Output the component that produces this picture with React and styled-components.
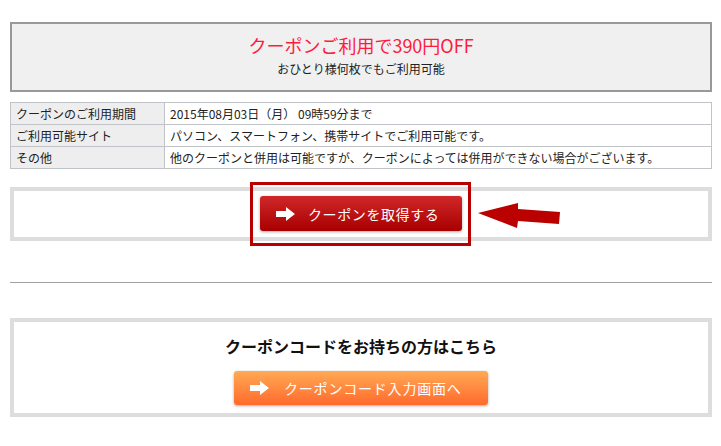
import React from "react";
import styled, { createGlobalStyle } from "styled-components";

const GlobalStyle = createGlobalStyle`
  body {
    margin: 0;
    background: #fff;
    font-family: "Noto Sans CJK JP", "Noto Sans", sans-serif;
    color: #333;
  }
`;

const Page = styled.div`
  width: 702px;
  margin-left: 10px;
  padding-top: 22px;
`;

const OfferBox = styled.div`
  border: 2px solid #999;
  background: #f0f0f0;
  text-align: center;
  padding: 9px 0 12px;

  h2 {
    margin: 0;
    font-size: 18px;
    line-height: 24px;
    font-weight: normal;
    color: #ff1a3c;
  }

  p {
    margin: 3px 0 0;
    font-size: 12px;
    line-height: 18px;
    color: #222;
  }
`;

const InfoTable = styled.table`
  width: 100%;
  margin-top: 10px;
  margin-bottom: 18px;
  border-collapse: collapse;
  font-size: 12px;

  th,
  td {
    border: 1px solid #c0c4c8;
    height: 21px;
    padding: 0 5px;
    text-align: left;
    font-weight: normal;
    color: #222;
    line-height: 20px;
  }

  th {
    width: 143px;
    background: #eeeeee;
  }
`;

const Section = styled.div`
  border: 4px solid #dddddd;
  display: flex;
  flex-direction: column;
  align-items: center;
  padding: ${(p) => p.$pad};
`;

const SectionTitle = styled.h3`
  margin: 0 0 13px;
  font-size: 16px;
  line-height: 24px;
  font-weight: bold;
  color: #111;
`;

const ButtonWrap = styled.div`
  position: relative;
`;

const Highlight = styled.div`
  position: absolute;
  top: -14px;
  bottom: -15px;
  left: -10px;
  right: -9px;
  border: 3px solid #b80000;
`;

const Pointer = styled.svg`
  position: absolute;
  left: calc(100% + 16px);
  top: 6px;
`;

const ActionButton = styled.a`
  display: flex;
  align-items: center;
  box-sizing: border-box;
  width: ${(p) => p.$width}px;
  height: ${(p) => p.$height}px;
  padding-left: 16px;
  border-radius: 3px;
  background: ${(p) =>
    p.$tone === "orange"
      ? "linear-gradient(#ffaa55, #ff6a2c)"
      : "linear-gradient(#d02828, #a80000)"};
  box-shadow: 0 1px 3px rgba(0, 0, 0, 0.35);
  color: #fff;
  font-size: 14px;
  letter-spacing: ${(p) => (p.$tone === "orange" ? "0.8px" : "0.6px")};
  text-decoration: none;
  cursor: pointer;

  svg {
    flex: none;
    margin-right: ${(p) => (p.$tone === "orange" ? "15px" : "13px")};
  }
`;

const Divider = styled.hr`
  border: 0;
  border-top: 1px solid #a0a0a0;
  margin: 41px 0 35px;
`;

const ArrowIcon = () => (
  <svg width="19" height="14" viewBox="0 0 19 14">
    <path d="M0 4h10V0l9 7-9 7v-4H0z" fill="#fff" />
  </svg>
);

export default function App() {
  return (
    <>
      <GlobalStyle />
      <Page>
        <OfferBox>
          <h2>クーポンご利用で390円OFF</h2>
          <p>おひとり様何枚でもご利用可能</p>
        </OfferBox>

        <InfoTable>
          <tbody>
            <tr>
              <th>クーポンのご利用期間</th>
              <td>2015年08月03日（月） 09時59分まで</td>
            </tr>
            <tr>
              <th>ご利用可能サイト</th>
              <td>パソコン、スマートフォン、携帯サイトでご利用可能です。</td>
            </tr>
            <tr>
              <th>その他</th>
              <td>他のクーポンと併用は可能ですが、クーポンによっては併用ができない場合がございます。</td>
            </tr>
          </tbody>
        </InfoTable>

        <Section $pad="5px 0 6px">
          <ButtonWrap>
            <ActionButton $width={202} $height={35}>
              <ArrowIcon />
              クーポンを取得する
            </ActionButton>
            <Highlight />
            <Pointer width="83" height="27" viewBox="0 0 83 27">
              <path
                d="M0 11 L40 1 L40 7 L82 10 L81 22 L40 19 L39 26 Z"
                fill="#bb0000"
              />
            </Pointer>
          </ButtonWrap>
        </Section>

        <Divider />

        <Section $pad="12px 0 8px">
          <SectionTitle>クーポンコードをお持ちの方はこちら</SectionTitle>
          <ActionButton $tone="orange" $width={254} $height={34}>
            <ArrowIcon />
            クーポンコード入力画面へ
          </ActionButton>
        </Section>
      </Page>
    </>
  );
}
